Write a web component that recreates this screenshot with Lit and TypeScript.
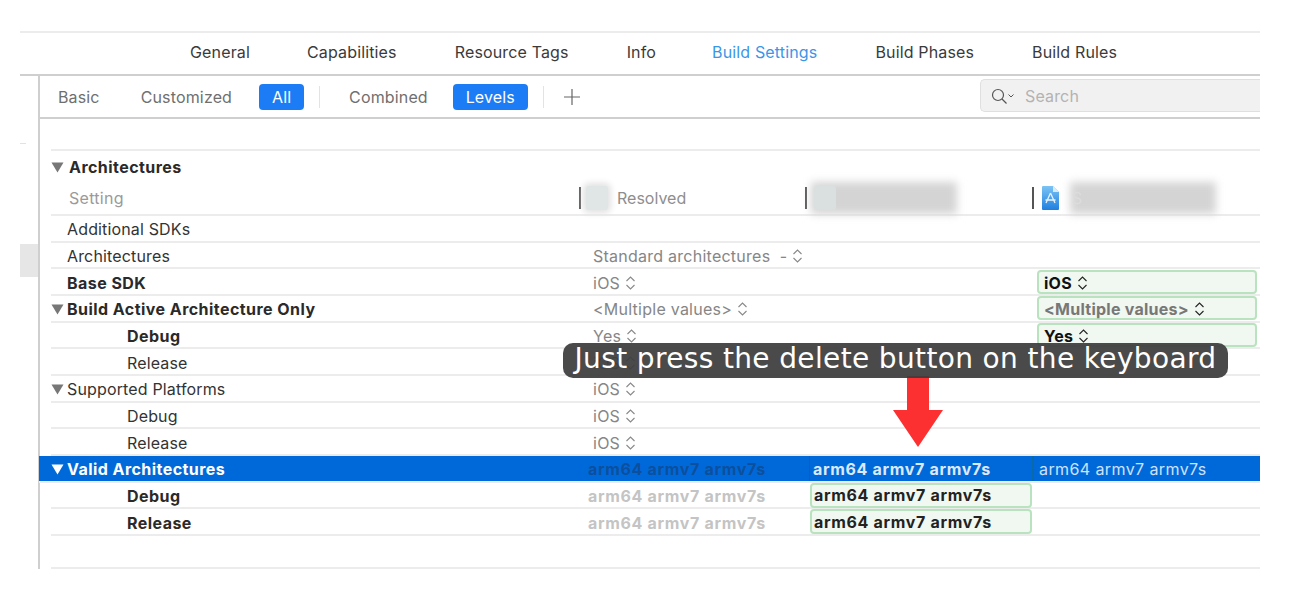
import { LitElement, html, css, svg } from "lit";
import { customElement } from "lit/decorators.js";

const updown = svg`<svg class="ud" width="11" height="16" viewBox="0 0 11 16" fill="none" stroke="currentColor" stroke-width="1.1"><path d="M1.5 6 5.5 2 9.5 6M1.5 10 5.5 14 9.5 10"/></svg>`;
const tri = html`<svg class="tri" width="13" height="11" viewBox="0 0 13 11"><path d="M.5 .5H12.5L6.5 10.5Z" fill="currentColor"/></svg>`;

type Cell = { t: string; ud?: boolean; cls?: string };
type Row = { name: string; nameCls?: string; tri?: boolean; indent?: boolean; c2?: Cell; c3?: Cell; c4?: Cell; cls?: string };

const rows: Row[] = [
  { name: "Additional SDKs" },
  { name: "Architectures", c2: { t: "Standard architectures  -", ud: true } },
  { name: "Base SDK", nameCls: "b", c2: { t: "iOS", ud: true }, c4: { t: "iOS", ud: true, cls: "green strong" } },
  { name: "Build Active Architecture Only", nameCls: "b", tri: true, c2: { t: "<Multiple values>", ud: true }, c4: { t: "<Multiple values>", ud: true, cls: "green multi" } },
  { name: "Debug", nameCls: "b", indent: true, c2: { t: "Yes", ud: true }, c4: { t: "Yes", ud: true, cls: "green strong" } },
  { name: "Release", indent: true, c2: { t: "iOS", ud: true } },
  { name: "Supported Platforms", tri: true, c2: { t: "iOS", ud: true } },
  { name: "Debug", indent: true, c2: { t: "iOS", ud: true } },
  { name: "Release", indent: true, c2: { t: "iOS", ud: true } },
  { name: "Valid Architectures", nameCls: "b", tri: true, cls: "sel", c2: { t: "arm64 armv7 armv7s", cls: "arm" }, c3: { t: "arm64 armv7 armv7s", cls: "armb" }, c4: { t: "arm64 armv7 armv7s", cls: "armr" } },
  { name: "Debug", nameCls: "b", indent: true, c2: { t: "arm64 armv7 armv7s", cls: "arm" }, c3: { t: "arm64 armv7 armv7s", cls: "green armb" } },
  { name: "Release", nameCls: "b", indent: true, c2: { t: "arm64 armv7 armv7s", cls: "arm" }, c3: { t: "arm64 armv7 armv7s", cls: "green armb" } },
];

@customElement("app-root")
export class AppRoot extends LitElement {
  static styles = css`
    :host { display: block; width: 1316px; height: 608px; background: #fff; overflow: hidden; position: relative;
      font-family: Inter, "Liberation Sans", Arial, sans-serif; font-size: 16px; letter-spacing: .15px; color: #333; }
    .wrap { margin: 0 56px 0 20px; padding-top: 31px; position: relative; }
    .tabs { display: flex; align-items: center; padding: 0 0 3px 170px; border-top: 2px solid #ececec; border-bottom: 2px solid #cfcfcf; box-sizing: border-box; height: 45px; color: #3a3a3a; }
    .tabs span { white-space: nowrap; }
    .tabs .gen { margin-right: 57px; }
    .tabs .cap { margin-right: 58px; }
    .tabs .res { margin-right: 58px; }
    .tabs .inf { margin-right: 56px; }
    .tabs .act { color: #3b96e8; margin-right: 58px; }
    .tabs .pha { margin-right: 58px; }
    .body { display: flex; height: 493px; }
    .side { width: 18px; position: relative; flex: none; }
    .tick { width: 6px; height: 1px; background: #e2e2e2; margin-top: 67px; }
    .stub { height: 33px; background: #e6e6e6; margin-top: 100px; }
    .main { flex: 1; border-left: 2px solid #cfcfcf; min-width: 0; }
    .filter { height: 43px; box-sizing: border-box; border-bottom: 2px solid #cfcfcf; display: flex; align-items: center; padding: 1px 0 0 18px; color: #6f6f6f; }
    .filter .lnk { white-space: nowrap; }
    .basic { margin-right: 41px; }
    .cust { margin-right: 27px; }
    .pillb { background: #1b7cf6; color: #fff; border-radius: 4px; height: 26px; display: flex; align-items: center; justify-content: center; box-sizing: border-box; }
    .all { width: 45px; }
    .lev { width: 75px; }
    .vsep { width: 1px; height: 22px; background: #e3e3e3; }
    .v1 { margin: 0 29px 0 15px; }
    .comb { margin-right: 25px; }
    .v2 { margin: 0 19px 0 15px; }
    .plus { flex: none; }
    .search { margin-left: auto; width: 280px; height: 33px; margin-top: -3px; box-sizing: border-box; background: #f1f1f1; border: 1px solid #dfdfdf; border-right: none; border-radius: 5px 0 0 5px; display: flex; align-items: center; padding: 1px 0 0 10px; gap: 9px; color: #b3b3b3; }
    .tbl { margin-left: 11px; padding-top: 30px; }
    .toprule { height: 2px; background: #ececec; }
    .group { height: 32px; display: flex; align-items: center; gap: 5px; font-weight: 700; letter-spacing: .45px; color: #2a2a2a; box-sizing: border-box; }
    .tri { color: #777; flex: none; }
    .hdr { height: 33px; display: grid; grid-template-columns: 528px 226px 227px 1fr; align-items: center; border-bottom: 2px solid #ececec; box-sizing: border-box; color: #9a9a9a; padding-bottom: 10px; letter-spacing: .3px; }
    .hdr .setting { padding-left: 18px; }
    .hcell { display: flex; align-items: center; position: relative; height: 30px; }
    .bar { width: 2px; height: 22px; background: #555; flex: none; }
    .sq { width: 22px; height: 24px; border-radius: 3px; background: #dfe6e5; box-shadow: 0 0 6px 3px #e2e2e2; margin-left: 5px; flex: none; }
    .resolved { margin-left: 9px; color: #8e8e8e; letter-spacing: 0; }
    .patch { position: relative; flex: none; height: 32px; display: flex; align-items: center; }
    .blur { position: absolute; inset: 0; background: #d4d4d4; filter: blur(4px); }
    .p1 { width: 146px; margin-left: 4px; }
    .p2 { width: 146px; margin-left: 11px; }
    .sq2 { position: relative; width: 22px; height: 24px; border-radius: 3px; background: #d9e0df; margin-left: 3px; }
    .faint { position: relative; color: #dcdcdc; margin-left: 2px; }
    .doc { margin-left: 8px; flex: none; }
    .row { height: 26.67px; display: grid; grid-template-columns: 528px 233px 225px 1fr; align-items: center; border-bottom: 2px solid #ececec; box-sizing: border-box; }
    .name { display: flex; align-items: center; gap: 3px; padding: 2px 0 0 16px; white-space: nowrap; color: #333; }
    .name.hast { padding-left: 0; }
    .name.ind { padding-left: 76px; }
    .name.b { font-weight: 700; letter-spacing: .45px; color: #2a2a2a; }
    .row.sel { margin-left: -12px; padding-left: 12px; background: #0069d9; color: #fff; }
    .row.sel .name, .row.sel .tri { color: #fff; }
    .cell { color: #868686; padding: 2px 0 0 14px; display: flex; align-items: center; gap: 5px; white-space: pre; height: 100%; box-sizing: border-box; letter-spacing: .25px; }
    .cell .ud { color: #888; flex: none; }
    .cell.green { background: #f0f8f1; border: 2px solid #b9e3bf; border-radius: 4px; height: 24px; padding-left: 5px; margin-right: 3px; }
    .cell.strong { color: #111; font-weight: 700; }
    .cell.strong .ud { color: #222; }
    .cell.multi { color: #777; font-weight: 700; }
    .cell.multi .ud { color: #222; }
    .cell.arm { color: #c4c4c4; font-weight: 700; padding-left: 9px; letter-spacing: .67px; }
    .cell.armb { color: #222; font-weight: 700; padding-left: 2px; letter-spacing: .67px; }
    .cell.armr { letter-spacing: .4px; }
    .cell.green.armb { padding: 0 0 0 2px; height: 25px; margin: 0 5px 0 -2px; }
    .sel .cell.arm { color: #0c4f9c; }
    .sel .cell.armb { color: #dbe9fb; padding-left: 3px; margin-left: -3px; border-left: 1px solid #0a5fb0; }
    .sel .cell.armr { color: #cfe2fb; font-weight: 400; padding-left: 5px; margin-left: -5px; border-left: 2px solid #0a6aa8; }
    .cell.empty { padding: 0; }
    .lastrow { height: 33px; border-bottom: 2px solid #ececec; box-sizing: border-box; }
    .toast { position: absolute; left: 563px; top: 343px; width: 665px; height: 35px; box-sizing: border-box; padding-bottom: 5px; background: rgba(60,60,60,.93); border-radius: 10px; color: #fff; display: flex; align-items: center; justify-content: center; font-family: "DejaVu Sans", sans-serif; font-size: 28px; letter-spacing: .36px; white-space: nowrap; z-index: 2; }
    .arrow { position: absolute; left: 892px; top: 376px; z-index: 1; }
  `;

  private cell(c?: Cell) {
    if (!c) return html`<div class="cell empty"></div>`;
    return html`<div class="cell ${c.cls ?? ""}">${c.t}${c.ud ? updown : ""}</div>`;
  }

  render() {
    return html`
      <div class="wrap">
        <div class="tabs">
          <span class="gen">General</span><span class="cap">Capabilities</span><span class="res">Resource Tags</span><span class="inf">Info</span><span class="act">Build Settings</span><span class="pha">Build Phases</span><span>Build Rules</span>
        </div>
        <div class="body">
          <div class="side"><div class="tick"></div><div class="stub"></div></div>
          <div class="main">
            <div class="filter">
              <span class="lnk basic">Basic</span><span class="lnk cust">Customized</span>
              <span class="pillb all">All</span><span class="vsep v1"></span>
              <span class="lnk comb">Combined</span><span class="pillb lev">Levels</span><span class="vsep v2"></span>
              <svg class="plus" width="18" height="18" viewBox="0 0 18 18" stroke="#666" stroke-width="1.2"><path d="M9 1v16M1 9h16"/></svg>
              <div class="search">
                <svg width="25" height="18" viewBox="0 0 25 18" fill="none" stroke="#555" stroke-width="1.2"><circle cx="7" cy="8" r="5.5"/><path d="M11 12l4.5 4.5"/><path d="M17.5 7.5l2.5 2.5 2.5-2.5" stroke-width="1"/></svg>
                <span>Search</span>
              </div>
            </div>
            <div class="tbl">
              <div class="toprule"></div>
              <div class="group">${tri}<span>Architectures</span></div>
              <div class="hdr">
                <div class="setting">Setting</div>
                <div class="hcell"><span class="bar"></span><span class="sq"></span><span class="resolved">Resolved</span></div>
                <div class="hcell"><span class="bar"></span><span class="patch p1"><span class="blur"></span><span class="sq2"></span></span></div>
                <div class="hcell"><span class="bar"></span>
                  <svg class="doc" width="17" height="24" viewBox="0 0 17 24"><defs><linearGradient id="dg" x1="0" y1="0" x2="0" y2="1"><stop offset="0" stop-color="#7cc3f5"/><stop offset="1" stop-color="#1f7fde"/></linearGradient></defs><path d="M1 0h10l6 6v17a1 1 0 0 1-1 1H1a1 1 0 0 1-1-1V1a1 1 0 0 1 1-1z" fill="url(#dg)"/><path d="M11 0l6 6h-6z" fill="#d5ecfc"/><path d="M8.5 7l4.5 10M8.5 7l-4.5 10M3.5 14h10" stroke="#e6f3fe" stroke-width="1.3" fill="none"/></svg>
                  <span class="patch p2"><span class="blur"></span><span class="faint">S</span></span></div>
              </div>
              ${rows.map((r) => html`
                <div class="row ${r.cls ?? ""}">
                  <div class="name ${r.nameCls ?? ""} ${r.tri ? "hast" : ""} ${r.indent ? "ind" : ""}">${r.tri ? tri : ""}<span>${r.name}</span></div>
                  ${this.cell(r.c2)}${this.cell(r.c3)}${this.cell(r.c4)}
                </div>`)}
              <div class="lastrow"></div>
            </div>
          </div>
        </div>
      </div>
      <svg class="arrow" width="52" height="72" viewBox="0 0 52 72"><path d="M15 0H37V34H51L26 71 1 34H15Z" fill="#fc3030"/></svg>
      <div class="toast">Just press the delete button on the keyboard</div>
    `;
  }
}
